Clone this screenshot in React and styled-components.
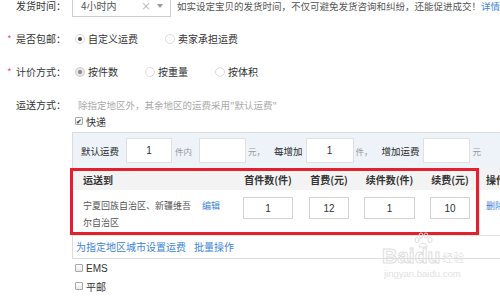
import React from "react";
import styled, { createGlobalStyle } from "styled-components";

const Global = createGlobalStyle`
  html, body { margin: 0; padding: 0; overflow: hidden; background: #fff; }
  body {
    font-family: "Noto Sans CJK SC", "Microsoft YaHei", sans-serif;
    font-size: 10px;
    color: #333;
  }
`;

const Page = styled.div`
  position: relative;
  width: 500px;
  height: 300px;
  overflow: hidden;
`;

const Form = styled.div`
  margin-top: -11px;
`;

const Row = styled.div`
  display: flex;
  align-items: center;
  height: 33px;
`;

const LabelCell = styled.div`
  flex: none;
  width: 72px;
  box-sizing: border-box;
  padding-left: 7px;
  display: flex;
  align-items: center;
  line-height: 16px;
  white-space: nowrap;
`;

const Star = styled.span`
  width: 9px;
  color: #f25a7a;
  font-size: 10px;
`;

const Select = styled.div`
  width: 110px;
  height: 22px;
  box-sizing: border-box;
  border: 1px solid #cfcfcf;
  display: flex;
  align-items: center;
  padding: 0 7px 0 8px;
  color: #555;
  font-size: 10px;
`;

const SelectValue = styled.span`
  flex: 1;
`;

const Clear = styled.span`
  color: #aaa;
  font-size: 10px;
  margin-right: 6px;
`;

const Caret = styled.span`
  width: 0;
  height: 0;
  border-left: 3.5px solid transparent;
  border-right: 3.5px solid transparent;
  border-top: 4px solid #999;
`;

const Hint = styled.span`
  margin-left: ${(p) => p.$ml || 6}px;
  color: ${(p) => p.$color || "#555"};
  font-size: 9.5px;
  white-space: nowrap;
  line-height: 16px;
`;

const Link = styled.a`
  color: #3d84d9;
  text-decoration: none;
  margin-left: ${(p) => p.$ml || 0}px;
`;

const RadioGroup = styled.div`
  display: flex;
  align-items: center;
  padding-left: 3px;
`;

const Option = styled.label`
  display: flex;
  align-items: center;
  gap: 3px;
  margin-right: 27px;
  white-space: nowrap;
`;

const Radio = styled.span`
  width: 10px;
  height: 10px;
  box-sizing: border-box;
  border-radius: 50%;
  border: 1px solid ${(p) => (p.$disabled ? "#d0d0d0" : "#dcdcdc")};
  background: ${(p) => (p.$disabled ? "#e4e4e4" : "#fff")};
  display: inline-flex;
  align-items: center;
  justify-content: center;
  &::after {
    content: "";
    display: ${(p) => (p.$checked ? "block" : "none")};
    width: 4px;
    height: 4px;
    border-radius: 50%;
    background: ${(p) => (p.$disabled ? "#888" : "#444")};
  }
`;

const ShipRow = styled.div`
  display: flex;
  align-items: flex-start;
  padding-top: 9px;
`;

const ShipContent = styled.div`
  flex: 1;
  display: flex;
  flex-direction: column;
  min-width: 0;
`;

const CheckLine = styled.label`
  display: flex;
  align-items: center;
  gap: 3px;
  padding-left: 3px;
  height: ${(p) => p.$h || 16}px;
  font-family: ${(p) => (p.$latin ? '"Liberation Sans", Arial, sans-serif' : "inherit")};
`;

const Box = styled.span`
  width: 8px;
  height: 8px;
  box-sizing: border-box;
  border: 1px solid #a8a8a8;
  border-radius: 1px;
  background: linear-gradient(#fff, #e8e8e8);
  display: inline-flex;
  align-items: center;
  justify-content: center;
  font-size: 7px;
  line-height: 1;
  color: #333;
`;

const Panel = styled.div`
  margin-top: 3px;
  width: 440px;
  border: 1px solid #dcdcdc;
  border-right: none;
  box-sizing: border-box;
`;

const DefaultRow = styled.div`
  height: 35px;
  background: #eef3f9;
  display: flex;
  align-items: center;
  padding-left: 8px;
  white-space: nowrap;
`;

const Strong = styled.span`
  color: #2a2a2a;
  font-size: 9.5px;
  margin-right: ${(p) => p.$mr || 0}px;
`;

const Unit = styled.span`
  color: #999;
  font-size: 8.5px;
  margin: 0 ${(p) => p.$mr || 0}px 0 ${(p) => p.$ml || 3}px;
`;

const NumInput = styled.div`
  width: ${(p) => p.$w}px;
  height: ${(p) => p.$h || 22}px;
  box-sizing: border-box;
  border: 1px solid ${(p) => p.$border || "#d3d3d3"};
  background: #fff;
  display: flex;
  align-items: center;
  justify-content: center;
  font-family: "Liberation Sans", Arial, sans-serif;
  font-size: 10px;
  color: #333;
`;

const TableWrap = styled.div`
  position: relative;
`;

const Grid = styled.div`
  display: grid;
  grid-template-columns: 163px 64px 58px 63px 58px 1fr;
`;

const HeadCell = styled.div`
  height: 22px;
  background: #f3f3f3;
  display: flex;
  align-items: center;
  justify-content: ${(p) => (p.$center ? "center" : "flex-start")};
  padding-left: ${(p) => p.$pl || 0}px;
  font-weight: bold;
  font-size: 10px;
  color: #333;
  white-space: nowrap;
  border-left: ${(p) => (p.$divider ? "1px solid #e2e2e2" : "none")};
`;

const BodyCell = styled.div`
  height: 46px;
  box-sizing: border-box;
  border-bottom: 1px solid #e3e3e3;
  display: flex;
  align-items: flex-start;
  justify-content: ${(p) => (p.$center ? "center" : "flex-start")};
  padding-top: ${(p) => p.$pt || 7}px;
  padding-left: ${(p) => p.$pl || 0}px;
  border-left: ${(p) => (p.$divider ? "1px solid #e2e2e2" : "none")};
`;

const Areas = styled.div`
  width: 110px;
  font-size: 9px;
  line-height: 17px;
  color: #555;
`;

const SmallLink = styled(Link)`
  font-size: 9px;
  line-height: 17px;
`;

const Highlight = styled.div`
  position: absolute;
  left: -3px;
  top: 0;
  width: 409px;
  height: 67px;
  box-sizing: border-box;
  border: 3px solid #e2212d;
  pointer-events: none;
`;

const Links = styled.div`
  padding: 3px 0 3px 3px;
  line-height: 16px;
  font-size: 10px;
`;

const Watermark = styled.div`
  position: absolute;
  left: 382px;
  top: 244px;
  pointer-events: none;
  display: flex;
  flex-direction: column;
`;

const WmTop = styled.div`
  display: flex;
  align-items: flex-end;
  gap: 2px;
`;

const WmBig = styled.span`
  font-family: "Liberation Sans", Arial, sans-serif;
  font-weight: bold;
  font-size: 21px;
  line-height: 24px;
  color: transparent;
  -webkit-text-stroke: 1px #dedede;
  position: relative;
`;

const WmCn = styled.span`
  font-size: 11px;
  color: #e3e3e3;
  line-height: 16px;
  margin-bottom: 3px;
`;

const WmUrl = styled.span`
  font-family: "Liberation Sans", Arial, sans-serif;
  font-size: 9.5px;
  color: #e2e2e2;
  line-height: 12px;
  margin-left: 2px;
`;

const Paw = () => (
  <svg width="22" height="16" viewBox="0 0 22 16" style={{ position: "absolute", left: 30, top: -12 }}>
    <g fill="none" stroke="#dedede" strokeWidth="1">
      <ellipse cx="5" cy="8" rx="2" ry="2.6" />
      <ellipse cx="9" cy="3.5" rx="2" ry="2.6" />
      <ellipse cx="14" cy="3.5" rx="2" ry="2.6" />
      <ellipse cx="18" cy="8" rx="2" ry="2.6" />
      <path d="M7 15 C7 10 15 10 15 15 Z" />
    </g>
  </svg>
);

export default function App() {
  return (
    <Page>
      <Global />
      <Form>
        <Row>
          <LabelCell>
            <Star />
            发货时间：
          </LabelCell>
          <Select>
            <SelectValue>4小时内</SelectValue>
            <Clear>×</Clear>
            <Caret />
          </Select>
          <Hint>
            如实设定宝贝的发货时间，不仅可避免发货咨询和纠纷，还能促进成交！<Link>详情</Link>
          </Hint>
        </Row>

        <Row>
          <LabelCell>
            <Star>*</Star>
            是否包邮：
          </LabelCell>
          <RadioGroup>
            <Option>
              <Radio $checked />
              自定义运费
            </Option>
            <Option>
              <Radio />
              卖家承担运费
            </Option>
          </RadioGroup>
        </Row>

        <Row>
          <LabelCell>
            <Star>*</Star>
            计价方式：
          </LabelCell>
          <RadioGroup>
            <Option>
              <Radio $checked $disabled />
              按件数
            </Option>
            <Option>
              <Radio />
              按重量
            </Option>
            <Option>
              <Radio />
              按体积
            </Option>
          </RadioGroup>
        </Row>

        <ShipRow>
          <LabelCell>
            <Star />
            运送方式：
          </LabelCell>
          <ShipContent>
            <Hint $color="#aaa">除指定地区外，其余地区的运费采用"默认运费"</Hint>
            <CheckLine>
              <Box>✔</Box>
              快递
            </CheckLine>
            <Panel>
              <DefaultRow>
                <Strong $mr={7}>默认运费</Strong>
                <NumInput $w={46} $h={25} $border="#e0e0e0">1</NumInput>
                <Unit $mr={7}>件内</Unit>
                <NumInput $w={47} $h={25} $border="#e0e0e0" />
                <Unit $mr={9} $ml={2}>元，</Unit>
                <Strong $mr={3}>每增加</Strong>
                <NumInput $w={48} $h={25} $border="#e0e0e0">1</NumInput>
                <Unit $mr={9} $ml={2}>件，</Unit>
                <Strong $mr={3}>增加运费</Strong>
                <NumInput $w={47} $h={25} $border="#e0e0e0" />
                <Unit>元</Unit>
              </DefaultRow>
              <TableWrap>
                <Grid>
                  <HeadCell $pl={10}>运送到</HeadCell>
                  <HeadCell $center>首件数(件)</HeadCell>
                  <HeadCell $center>首费(元)</HeadCell>
                  <HeadCell $center>续件数(件)</HeadCell>
                  <HeadCell $center>续费(元)</HeadCell>
                  <HeadCell $pl={6} $divider>操作</HeadCell>

                  <BodyCell $pl={10} $pt={7}>
                    <Areas>宁夏回族自治区、新疆维吾尔自治区</Areas>
                    <SmallLink $ml={9}>编辑</SmallLink>
                  </BodyCell>
                  <BodyCell $center>
                    <NumInput $w={50}>1</NumInput>
                  </BodyCell>
                  <BodyCell $center>
                    <NumInput $w={40}>12</NumInput>
                  </BodyCell>
                  <BodyCell $center>
                    <NumInput $w={51}>1</NumInput>
                  </BodyCell>
                  <BodyCell $center>
                    <NumInput $w={40}>10</NumInput>
                  </BodyCell>
                  <BodyCell $pl={6} $divider>
                    <SmallLink>删除</SmallLink>
                  </BodyCell>
                </Grid>
                <Highlight />
              </TableWrap>
              <Links>
                <Link>为指定地区城市设置运费</Link>
                <Link $ml={8}>批量操作</Link>
              </Links>
            </Panel>
            <CheckLine $h={18} $latin>
              <Box />
              EMS
            </CheckLine>
            <CheckLine $h={18}>
              <Box />
              平邮
            </CheckLine>
          </ShipContent>
        </ShipRow>
      </Form>
      <Watermark>
        <WmTop>
          <WmBig>
            Baidu
            <Paw />
          </WmBig>
          <WmCn>经验</WmCn>
        </WmTop>
        <WmUrl>jingyan.baidu.com</WmUrl>
      </Watermark>
    </Page>
  );
}
